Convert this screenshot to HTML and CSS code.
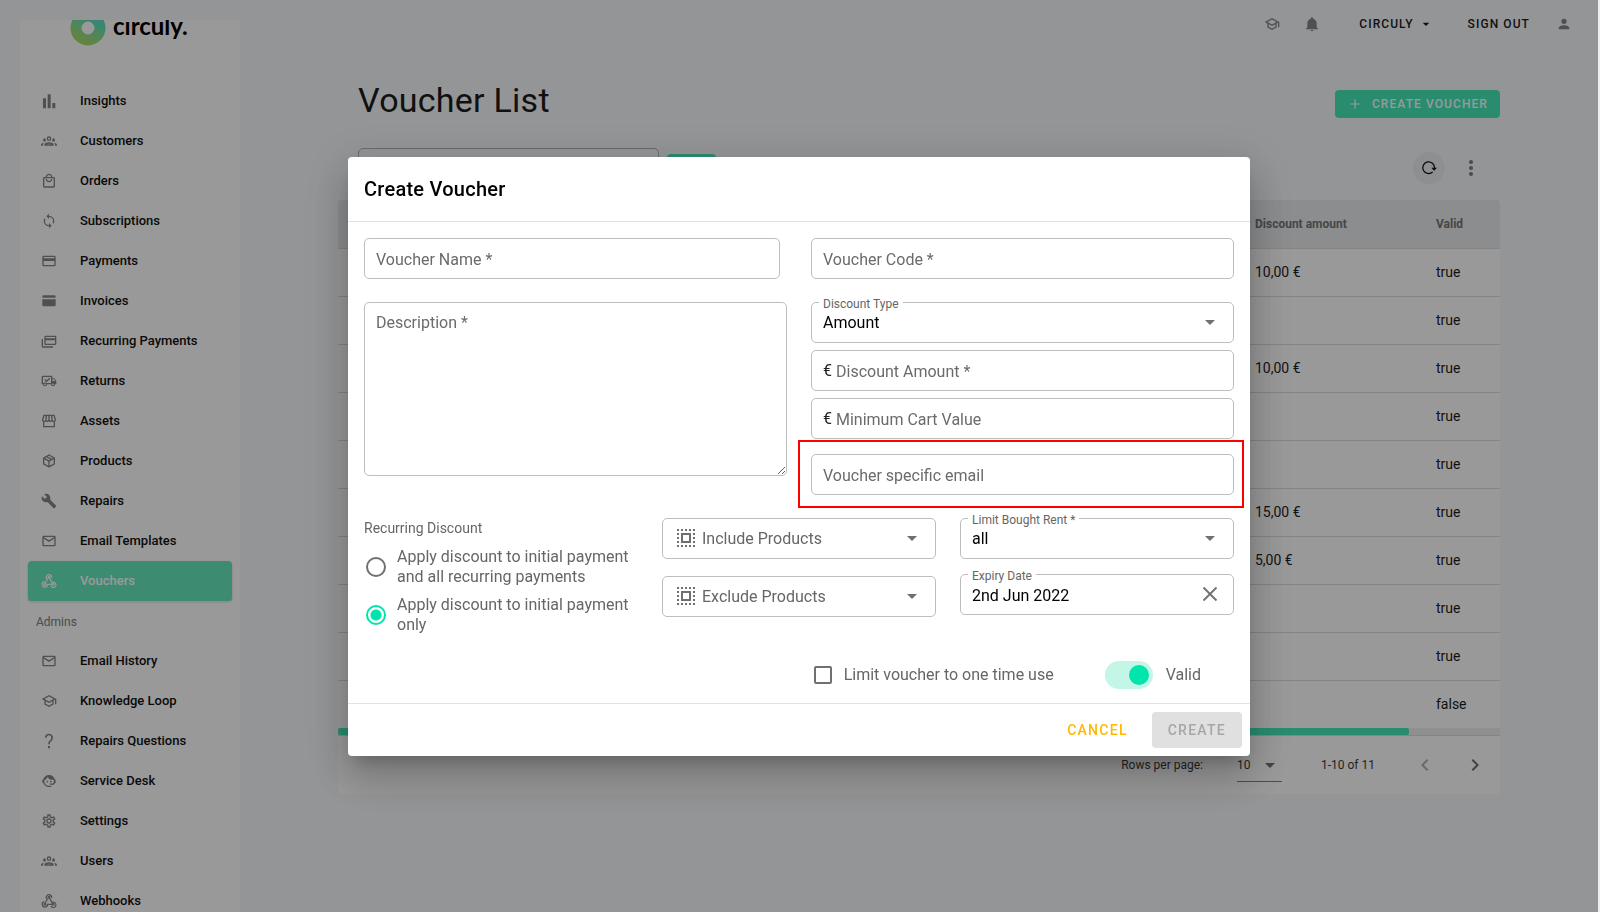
FILE: index.html
```html
<!DOCTYPE html>
<html lang="en">
<head>
<meta charset="utf-8">
<title>circuly – Voucher List</title>
<link rel="stylesheet" href="styles.css">
</head>
<body>
<svg class="sprite" aria-hidden="true">
  <symbol id="i-chart" viewBox="0 0 24 24"><path d="M3 23V8h4.500v15zM10 23V2h4.500v21zM17 23v-8h4.500v8z"/></symbol>
  <symbol id="i-group" viewBox="0 0 24 24"><path d="M12 5a3.500 3.500 0 0 0-3.500 3.500A3.500 3.500 0 0 0 12 12a3.500 3.500 0 0 0 3.500-3.500A3.500 3.500 0 0 0 12 5m0 2a1.500 1.500 0 0 1 1.500 1.500A1.500 1.500 0 0 1 12 10a1.500 1.500 0 0 1-1.500-1.500A1.500 1.500 0 0 1 12 7M5.500 8A2.500 2.500 0 0 0 3 10.500c0 .94.530 1.750 1.290 2.180.360.200.770.320 1.210.320s.850-.120 1.210-.320c.370-.210.680-.510.910-.870A5.420 5.420 0 0 1 6.500 8.500v-.280C6.200 8.080 5.860 8 5.500 8m13 0c-.360 0-.700.080-1 .220v.280c0 1.200-.390 2.360-1.120 3.310.120.190.250.340.400.490A2.500 2.500 0 0 0 21 10.500 2.500 2.500 0 0 0 18.500 8M12 14c-2.340 0-7 1.170-7 3.500V19h14v-1.500c0-2.330-4.660-3.500-7-3.500m-7.290.550C2.780 14.780 0 15.760 0 17.500V19h3v-1.930c0-1.010.690-1.850 1.710-2.520m14.580 0c1.020.670 1.710 1.510 1.710 2.520V19h3v-1.500c0-1.740-2.780-2.720-4.710-2.950M12 16c1.530 0 3.240.500 4.230 1H7.770c.990-.500 2.700-1 4.230-1"/></symbol>
  <symbol id="i-bag" viewBox="0 0 24 24"><path d="M19 6H17C17 3.2 14.8 1 12 1S7 3.2 7 6H5C3.9 6 3 6.9 3 8V20C3 21.100 3.900 22 5 22H19C20.100 22 21 21.100 21 20V8C21 6.900 20.100 6 19 6M12 3C13.700 3 15 4.300 15 6H9C9 4.300 10.300 3 12 3M19 20H5V8H19V20M12 12C10.300 12 9 10.700 9 9H7C7 11.800 9.200 14 12 14S17 11.800 17 9H15C15 10.700 13.700 12 12 12Z"/></symbol>
  <symbol id="i-sync" viewBox="0 0 24 24"><path d="M12,18A6,6 0 0,1 6,12C6,11 6.25,10.03 6.7,9.2L5.24,7.74C4.46,8.97 4,10.43 4,12A8,8 0 0,0 12,20V23L16,19L12,15M12,4V1L8,5L12,9V6A6,6 0 0,1 18,12C18,13 17.75,13.97 17.3,14.8L18.76,16.26C19.54,15.03 20,13.57 20,12A8,8 0 0,0 12,4Z"/></symbol>
  <symbol id="i-card" viewBox="0 0 24 24"><path d="M20,8H4V6H20M20,18H4V12H20M20,4H4C2.89,4 2,4.89 2,6V18C2,19.1 2.89,20 4,20H20C21.1,20 22,19.1 22,18V6C22,4.89 21.1,4 20,4Z"/></symbol>
  <symbol id="i-cardfill" viewBox="0 0 24 24"><path d="M4 3.500h16a2 2 0 0 1 2 2V7H2V5.500a2 2 0 0 1 2-2M2 9.500h20V18a2 2 0 0 1-2 2H4a2 2 0 0 1-2-2z"/></symbol>
  <symbol id="i-cards" viewBox="0 0 24 24"><path d="M21,8V6H7V8H21M21,16V11H7V16H21M21,4A2,2 0 0,1 23,6V16A2,2 0 0,1 21,18H7C5.89,18 5,17.1 5,16V6C5,4.89 5.89,4 7,4H21M3,20H18V22H3A2,2 0 0,1 1,20V9H3V20Z"/></symbol>
  <symbol id="i-truck" viewBox="0 0 24 24"><path fill-rule="evenodd" d="M3 4h14v4h3l3 4v5h-2a3 3 0 0 1-6 0H9a3 3 0 0 1-6 0H1V6a2 2 0 0 1 2-2m0 2v9h.800a3 3 0 0 1 4.400 0H15V6zm14 3.500V12h4.500l-2-2.500zM6 15.700a1.300 1.300 0 1 0 0 2.600 1.300 1.300 0 0 0 0-2.600m12 0a1.300 1.300 0 1 0 0 2.600 1.300 1.300 0 0 0 0-2.600M5 10.500 6.400 9l2 2 4-4 1.400 1.500-5.400 5.400z"/></symbol>
  <symbol id="i-store" viewBox="0 0 24 24"><path fill="none" stroke="currentColor" stroke-width="2" d="M4 12v8.500h16V12M4.500 3.500h15L21.500 10a2.400 2.400 0 0 1-4.800.500 2.400 2.400 0 0 1-4.700 0 2.400 2.400 0 0 1-4.700 0A2.400 2.400 0 0 1 2.500 10zM8.200 3.500 7.300 10M12 3.500V10M15.800 3.500l.9 6.500"/></symbol>
  <symbol id="i-box" viewBox="0 0 24 24"><path d="M21,16.5C21,16.88 20.79,17.21 20.47,17.38L12.57,21.82C12.41,21.94 12.21,22 12,22C11.79,22 11.59,21.94 11.43,21.82L3.53,17.38C3.21,17.21 3,16.88 3,16.5V7.5C3,7.12 3.21,6.79 3.53,6.62L11.43,2.18C11.59,2.06 11.79,2 12,2C12.21,2 12.41,2.06 12.57,2.18L20.47,6.62C20.79,6.79 21,7.12 21,7.5V16.5M12,4.15L10.11,5.22L16,8.61L17.96,7.5L12,4.15M6.04,7.5L12,10.85L13.96,9.75L8.08,6.35L6.04,7.5M5,15.91L11,19.29V12.58L5,9.21V15.91M19,15.91V9.21L13,12.58V19.29L19,15.91Z"/></symbol>
  <symbol id="i-wrench" viewBox="0 0 24 24"><path d="M22.7,19L13.6,9.9C14.5,7.6 14,4.9 12.1,3C10.1,1 7.1,0.6 4.7,1.7L9,6L6,9L1.6,4.7C0.4,7.1 0.9,10.1 2.9,12.1C4.8,14 7.5,14.5 9.8,13.6L18.9,22.7C19.3,23.1 19.9,23.1 20.3,22.7L22.6,20.4C23.1,20 23.1,19.3 22.7,19Z"/></symbol>
  <symbol id="i-mail" viewBox="0 0 24 24"><path d="M4,4H20A2,2 0 0,1 22,6V18A2,2 0 0,1 20,20H4C2.89,20 2,19.1 2,18V6C2,4.89 2.89,4 4,4M12,11L20,6H4L12,11M4,18H20V8.37L12,13.36L4,8.37V18Z"/></symbol>
  <symbol id="i-hook" viewBox="0 0 24 24"><g fill="none" stroke="currentColor" stroke-width="1.800"><circle cx="12" cy="6.500" r="1.400"/><circle cx="6" cy="17" r="1.400"/><circle cx="18" cy="17" r="1.400"/><path d="M15.800 7.500A4 4 0 1 0 9.500 9.700L6.200 15M5 13a4.100 4.100 0 1 0 5 4h6.500M13 8l3.500 6.200a4 4 0 1 1-1.700 5.300"/></g></symbol>
  <symbol id="i-school" viewBox="0 0 24 24"><path d="M12 3L1 9L5 11.18V17.18L12 21L19 17.18V11.18L21 10.09V17H23V9L12 3M18.82 9L12 12.72L5.18 9L12 5.28L18.82 9M17 16L12 18.72L7 16V12.27L12 15L17 12.27V16Z"/></symbol>
  <symbol id="i-help" viewBox="0 0 24 24"><path d="M10.500 19.500h3V23h-3zM12 1c5.350.220 7.680 5.620 4.500 10.170-.830 1.200-2.170 1.860-2.700 2.800-.400.730-.400 1.730-.400 3h-2.500c0-1.670 0-3.080.670-4.080.660-1 1.800-1.660 2.630-2.520C16.500 7.600 15.300 3.700 12 3.400A3.700 3.700 0 0 0 8.300 7H5.800A6.200 6.200 0 0 1 12 1"/></symbol>
  <symbol id="i-agent" viewBox="0 0 24 24"><path d="M18.72,14.76C19.07,13.91 19.26,13 19.26,12C19.26,11.28 19.15,10.59 18.96,9.95C18.31,10.1 17.63,10.18 16.92,10.18C13.86,10.18 11.15,8.67 9.5,6.34C8.61,8.5 6.91,10.26 4.77,11.22C4.73,11.47 4.73,11.74 4.73,12A7.27,7.27 0 0,0 12,19.27C13.05,19.27 14.06,19.04 14.97,18.63C15.54,19.72 15.8,20.26 15.78,20.26C14.14,20.81 12.87,21.08 12,21.08C9.58,21.08 7.27,20.13 5.57,18.42C4.53,17.38 3.76,16.11 3.33,14.73H2V10.18H3.09C3.93,6.04 7.6,2.92 12,2.92C14.4,2.92 16.71,3.87 18.42,5.58C19.69,6.84 20.54,8.45 20.89,10.18H22V14.73H21.94L18.38,18L13.08,17.4V15.73H17.91L18.72,14.76M9.27,11.77A1.14,1.14 0 1,1 9.26,11.77M14.72,11.77A1.14,1.14 0 1,1 14.71,11.77Z"/></symbol>
  <symbol id="i-cog" viewBox="0 0 24 24"><path d="M12,8A4,4 0 0,1 16,12A4,4 0 0,1 12,16A4,4 0 0,1 8,12A4,4 0 0,1 12,8M12,10A2,2 0 0,0 10,12A2,2 0 0,0 12,14A2,2 0 0,0 14,12A2,2 0 0,0 12,10M10,22C9.75,22 9.54,21.82 9.5,21.58L9.13,18.93C8.5,18.68 7.96,18.34 7.44,17.94L4.95,18.95C4.73,19.03 4.46,18.95 4.34,18.73L2.34,15.27C2.21,15.05 2.27,14.78 2.46,14.63L4.57,12.97L4.5,12L4.57,11L2.46,9.37C2.27,9.22 2.21,8.95 2.34,8.73L4.34,5.27C4.46,5.05 4.73,4.96 4.95,5.05L7.44,6.05C7.96,5.66 8.5,5.32 9.13,5.07L9.5,2.42C9.54,2.18 9.75,2 10,2H14C14.25,2 14.46,2.18 14.5,2.42L14.87,5.07C15.5,5.32 16.04,5.66 16.56,6.05L19.05,5.05C19.27,4.96 19.54,5.05 19.66,5.27L21.66,8.73C21.79,8.95 21.73,9.22 21.54,9.37L19.43,11L19.5,12L19.43,13L21.54,14.63C21.73,14.78 21.79,15.05 21.66,15.27L19.66,18.73C19.54,18.95 19.27,19.04 19.05,18.95L16.56,17.95C16.04,18.34 15.5,18.68 14.87,18.93L14.5,21.58C14.46,21.82 14.25,22 14,22H10M11.25,4L10.88,6.61C9.68,6.86 8.62,7.5 7.85,8.39L5.44,7.35L4.69,8.65L6.8,10.2C6.4,11.37 6.4,12.64 6.8,13.8L4.68,15.36L5.43,16.66L7.86,15.62C8.63,16.5 9.68,17.14 10.87,17.38L11.24,20H12.76L13.13,17.39C14.32,17.14 15.37,16.5 16.14,15.62L18.57,16.66L19.32,15.36L17.2,13.81C17.6,12.64 17.6,11.37 17.2,10.2L19.31,8.65L18.56,7.35L16.15,8.39C15.38,7.5 14.32,6.86 13.12,6.62L12.75,4H11.25Z"/></symbol>
  <symbol id="i-bell" viewBox="0 0 24 24"><path d="M21,19V20H3V19L5,17V11C5,7.9 7.03,5.17 10,4.29C10,4.19 10,4.1 10,4A2,2 0 0,1 12,2A2,2 0 0,1 14,4C14,4.1 14,4.19 14,4.29C16.97,5.17 19,7.9 19,11V17L21,19M14,21A2,2 0 0,1 12,23A2,2 0 0,1 10,21"/></symbol>
  <symbol id="i-user" viewBox="0 0 24 24"><path d="M12,4A4,4 0 0,1 16,8A4,4 0 0,1 12,12A4,4 0 0,1 8,8A4,4 0 0,1 12,4M12,14C16.42,14 20,15.79 20,18V20H4V18C4,15.79 7.58,14 12,14Z"/></symbol>
  <symbol id="i-caret" viewBox="0 0 24 24"><path d="M7 10l5 5 5-5z"/></symbol>
  <symbol id="i-plus" viewBox="0 0 24 24"><path d="M19 12.900h-6.100V19h-1.800v-6.100H5v-1.800h6.100V5h1.800v6.100H19z"/></symbol>
  <symbol id="i-reload" viewBox="0 0 24 24"><path fill="none" stroke="currentColor" stroke-width="1.900" d="M17.500 18A8.800 8.800 0 1 1 20.300 12"/><path d="M15.500 11.500h8.500l-4.300 4.500z"/></symbol>
  <symbol id="i-dots" viewBox="0 0 24 24"><circle cx="12" cy="6" r="2.100"/><circle cx="12" cy="12" r="2.100"/><circle cx="12" cy="18" r="2.100"/></symbol>
  <symbol id="i-left" viewBox="0 0 24 24"><path d="M15.410 16.580 10.830 12l4.580-4.590L14 6l-6 6 6 6z"/></symbol>
  <symbol id="i-right" viewBox="0 0 24 24"><path d="M8.590 16.580 13.170 12 8.590 7.410 10 6l6 6-6 6z"/></symbol>
  <symbol id="i-close" viewBox="0 0 24 24"><path fill="none" stroke="currentColor" stroke-width="1.800" d="M5.500 5.500l13 13M18.500 5.500l-13 13"/></symbol>
  <symbol id="i-select" viewBox="0 0 24 24"><path fill="none" stroke="currentColor" stroke-width="2" d="M8 8h8v8H8z"/><path fill="none" stroke="currentColor" stroke-width="2" stroke-dasharray="2 2" d="M3 4h18M3 20h18M4 3v18M20 3v18"/></symbol>
</svg>

<div class="app">
  <aside class="sidebar">
    <div class="logo">
      <svg class="logo-mark" viewBox="0 8 36 27">
        <defs><linearGradient id="ring" x1="0.800" y1="0" x2="0.300" y2="1"><stop offset="0.150" stop-color="#5ee0c0"/><stop offset="0.550" stop-color="#7fe09a"/><stop offset="1" stop-color="#a5dc6c"/></linearGradient></defs>
        <circle cx="18" cy="16" r="12" fill="none" stroke="url(#ring)" stroke-width="11"/>
      </svg>
      <span class="logo-name">circuly.</span>
    </div>
    <nav class="nav">
      <a class="nav-item" href="#"><svg class="icon"><use href="#i-chart"/></svg>Insights</a>
      <a class="nav-item" href="#"><svg class="icon"><use href="#i-group"/></svg>Customers</a>
      <a class="nav-item" href="#"><svg class="icon"><use href="#i-bag"/></svg>Orders</a>
      <a class="nav-item" href="#"><svg class="icon"><use href="#i-sync"/></svg>Subscriptions</a>
      <a class="nav-item" href="#"><svg class="icon"><use href="#i-card"/></svg>Payments</a>
      <a class="nav-item" href="#"><svg class="icon"><use href="#i-cardfill"/></svg>Invoices</a>
      <a class="nav-item" href="#"><svg class="icon"><use href="#i-cards"/></svg>Recurring Payments</a>
      <a class="nav-item" href="#"><svg class="icon"><use href="#i-truck"/></svg>Returns</a>
      <a class="nav-item" href="#"><svg class="icon"><use href="#i-store"/></svg>Assets</a>
      <a class="nav-item" href="#"><svg class="icon"><use href="#i-box"/></svg>Products</a>
      <a class="nav-item" href="#"><svg class="icon"><use href="#i-wrench"/></svg>Repairs</a>
      <a class="nav-item" href="#"><svg class="icon"><use href="#i-mail"/></svg>Email Templates</a>
      <a class="nav-item active" href="#"><svg class="icon"><use href="#i-hook"/></svg>Vouchers</a>
      <div class="nav-heading">Admins</div>
      <a class="nav-item" href="#"><svg class="icon"><use href="#i-mail"/></svg>Email History</a>
      <a class="nav-item" href="#"><svg class="icon"><use href="#i-school"/></svg>Knowledge Loop</a>
      <a class="nav-item" href="#"><svg class="icon"><use href="#i-help"/></svg>Repairs Questions</a>
      <a class="nav-item" href="#"><svg class="icon"><use href="#i-agent"/></svg>Service Desk</a>
      <a class="nav-item" href="#"><svg class="icon"><use href="#i-cog"/></svg>Settings</a>
      <a class="nav-item" href="#"><svg class="icon"><use href="#i-group"/></svg>Users</a>
      <a class="nav-item" href="#"><svg class="icon"><use href="#i-hook"/></svg>Webhooks</a>
    </nav>
  </aside>

  <div class="page">
    <header class="topbar">
      <button class="plain" aria-label="Knowledge"><svg class="icon"><use href="#i-school"/></svg></button>
      <button class="plain" aria-label="Notifications"><svg class="icon"><use href="#i-bell"/></svg></button>
      <button class="plain account">CIRCULY<svg class="icon"><use href="#i-caret"/></svg></button>
      <button class="plain signout">SIGN OUT</button>
      <button class="plain" aria-label="Profile"><svg class="icon"><use href="#i-user"/></svg></button>
    </header>
    <main class="content">
      <div class="title-row">
        <h1>Voucher List</h1>
        <button class="create"><svg class="icon"><use href="#i-plus"/></svg>CREATE VOUCHER</button>
      </div>
      <div class="tools">
        <input class="search" type="text" aria-label="Search">
        <button class="search-btn" aria-label="Run search"></button>
        <button class="plain reload" aria-label="Reload"><svg class="icon"><use href="#i-reload"/></svg></button>
        <button class="plain more" aria-label="More"><svg class="icon"><use href="#i-dots"/></svg></button>
      </div>
      <section class="card">
        <table>
          <thead><tr><th class="rest"></th><th class="amount">Discount amount</th><th class="valid">Valid</th></tr></thead>
          <tbody>
            <tr><td></td><td>10,00 €</td><td>true</td></tr>
            <tr><td></td><td></td><td>true</td></tr>
            <tr><td></td><td>10,00 €</td><td>true</td></tr>
            <tr><td></td><td></td><td>true</td></tr>
            <tr><td></td><td></td><td>true</td></tr>
            <tr><td></td><td>15,00 €</td><td>true</td></tr>
            <tr><td></td><td>5,00 €</td><td>true</td></tr>
            <tr><td></td><td></td><td>true</td></tr>
            <tr><td></td><td></td><td>true</td></tr>
            <tr><td></td><td></td><td>false</td></tr>
          </tbody>
        </table>
        <div class="scroll"><div class="thumb"></div></div>
        <footer class="pager">
          <label for="rows">Rows per page:</label>
          <span class="rows"><select id="rows"><option>10</option></select><svg class="icon"><use href="#i-caret"/></svg></span>
          <span class="range">1-10 of 11</span>
          <button class="plain prev" aria-label="Previous page" disabled><svg class="icon"><use href="#i-left"/></svg></button>
          <button class="plain next" aria-label="Next page"><svg class="icon"><use href="#i-right"/></svg></button>
        </footer>
      </section>
    </main>
  </div>
</div>

<div class="overlay">
  <form class="dialog" role="dialog" aria-labelledby="dialog-title">
    <h2 id="dialog-title">Create Voucher</h2>
    <div class="dialog-body">
      <div class="two">
        <div class="field name"><input type="text" placeholder="Voucher Name *" aria-label="Voucher Name"></div>
        <div class="field"><input type="text" placeholder="Voucher Code *" aria-label="Voucher Code"></div>
        <textarea placeholder="Description *" aria-label="Description"></textarea>
        <div class="stack">
          <div class="field"><label class="notch" for="type">Discount Type</label><select id="type"><option>Amount</option></select><svg class="icon"><use href="#i-caret"/></svg></div>
          <div class="field"><span class="prefix">€</span><input type="text" placeholder="Discount Amount *" aria-label="Discount Amount"></div>
          <div class="field"><span class="prefix">€</span><input type="text" placeholder="Minimum Cart Value" aria-label="Minimum Cart Value"></div>
          <div class="field email"><input type="email" placeholder="Voucher specific email" aria-label="Voucher specific email"><span class="highlight"></span></div>
        </div>
      </div>
      <div class="three">
        <div class="radios" role="radiogroup" aria-labelledby="recurring">
          <div class="legend" id="recurring">Recurring Discount</div>
          <label class="radio"><input type="radio" name="recurring">Apply discount to initial payment and all recurring payments</label>
          <label class="radio"><input type="radio" name="recurring" checked>Apply discount to initial payment only</label>
        </div>
        <div class="products">
          <div class="field"><svg class="icon lead"><use href="#i-select"/></svg><select class="muted" aria-label="Include Products"><option>Include Products</option></select><svg class="icon"><use href="#i-caret"/></svg></div>
          <div class="field"><svg class="icon lead"><use href="#i-select"/></svg><select class="muted" aria-label="Exclude Products"><option>Exclude Products</option></select><svg class="icon"><use href="#i-caret"/></svg></div>
        </div>
        <div class="limits">
          <div class="field"><label class="notch" for="rent">Limit Bought Rent *</label><select id="rent"><option>all</option></select><svg class="icon"><use href="#i-caret"/></svg></div>
          <div class="field"><label class="notch" for="expiry">Expiry Date</label><input id="expiry" type="text" value="2nd Jun 2022"><button type="button" class="plain" aria-label="Clear date"><svg class="icon"><use href="#i-close"/></svg></button></div>
        </div>
      </div>
      <div class="options">
        <label class="once"><input type="checkbox">Limit voucher to one time use</label>
        <label class="switch"><input type="checkbox" role="switch" checked>Valid</label>
      </div>
    </div>
    <div class="actions">
      <button type="button" class="cancel">CANCEL</button>
      <button type="submit" class="submit" disabled>CREATE</button>
    </div>
  </form>
</div>
</body>
</html>
```
FILE: styles.css
```css
* { box-sizing: border-box; }
body {
  margin: 0;
  background: #f7f9fc;
  color: #1c1c1c;
  font: 14px/20px Roboto, "Liberation Sans", sans-serif;
}
button, input, select, textarea { font: inherit; color: inherit; margin: 0; }
button { cursor: pointer; }
.sprite { position: absolute; width: 0; height: 0; }
.icon { width: 16px; height: 16px; fill: currentColor; flex: none; display: block; }
.plain { border: 0; padding: 0; background: none; display: flex; align-items: center; }

.app { display: flex; height: 100vh; overflow: hidden; }

.sidebar {
  flex: none;
  width: 220px;
  margin: 20px 0 0 20px;
  background: #fff;
  overflow: hidden;
}
.logo { display: flex; align-items: flex-start; gap: 7px; height: 60px; padding-left: 50px; }
.logo-mark { width: 36px; height: 27px; }
.logo-name { font: 700 24px/12px Lato, sans-serif; color: #000; }
.nav { padding: 1px 8px 0; }
.nav-item {
  display: flex;
  align-items: center;
  gap: 23px;
  height: 40px;
  padding-left: 13px;
  border-radius: 4px;
  font-size: 13px;
  font-weight: 500;
  color: #111;
  text-decoration: none;
}
.nav-item .icon { color: #858585; }
.nav-item.active { background: #67e9be; color: #fff; box-shadow: 0 1px 2px rgba(0, 0, 0, .25); }
.nav-item.active .icon { color: #fff; }
.nav-heading { height: 40px; padding-left: 8px; font-size: 12px; line-height: 40px; color: #808080; border-top: 1px solid #eee; }

.page { flex: 1; min-width: 0; }
.topbar {
  display: flex;
  align-items: center;
  justify-content: flex-end;
  height: 48px;
  padding-right: 28px;
}
.topbar .icon { color: #858585; }
.topbar .plain { font-size: 12px; font-weight: 500; letter-spacing: .09em; }
.topbar .plain + .plain { margin-left: 24px; }
.topbar .plain + .account { margin-left: 39px; }
.account { gap: 4px; }
.topbar .account .icon { color: #1c1c1c; }
.topbar .account + .signout { margin-left: 34px; }
.topbar .signout + .plain { margin-left: 26px; }

.content { padding: 0 100px 0 98px; }
.title-row {
  display: flex;
  align-items: flex-start;
  justify-content: space-between;
  height: 96px;
  padding-left: 20px;
}
h1 { margin: 32px 0 0; font-size: 34px; font-weight: 400; line-height: 40px; letter-spacing: .0073em; }
.create {
  display: flex;
  align-items: center;
  gap: 9px;
  height: 28px;
  margin-top: 42px;
  padding: 0 12px;
  border: 0;
  border-radius: 4px;
  background: #46e9b9;
  color: #fff;
  font-size: 12px;
  font-weight: 500;
  letter-spacing: .09em;
}
.tools { display: flex; align-items: center; height: 40px; margin: 4px 0 12px; padding: 0 17px 0 20px; }
.search { width: 301px; height: 40px; border: 1px solid #b0b2b6; border-radius: 5px; background: none; }
.search-btn { width: 49px; height: 28px; margin-left: 8px; border: 0; border-radius: 4px; background: #46e9b9; }
.reload { justify-content: center; width: 32px; height: 32px; margin-left: auto; border-radius: 50%; background: #eceef0; color: #111; }
.more { margin-left: 14px; color: #808080; }
.more .icon { width: 24px; height: 24px; }

.card { background: #fff; border-radius: 4px; overflow: hidden; }
table { width: 100%; border-collapse: collapse; table-layout: fixed; }
th, td { height: 48px; padding: 0; text-align: left; border-bottom: 1px solid #dcdcdc; }
th { background: #e9ebee; font-size: 12px; font-weight: 700; color: #757575; }
tbody tr:last-child td { border-bottom: 0; }
.amount { width: 181px; }
.valid { width: 64px; }
.scroll { height: 8px; background: #efefef; border-bottom: 1px solid #dcdcdc; }
.thumb { width: 92.2%; height: 7px; border-radius: 2px; background: #46e9b9; }
.pager { display: flex; align-items: center; height: 58px; padding-right: 13px; justify-content: flex-end; font-size: 12px; color: #3a3a3a; }
.rows { display: flex; align-items: center; width: 45px; height: 34px; margin-left: 34px; border-bottom: 1px solid #808080; }
.rows select { appearance: none; flex: 1; min-width: 0; width: 20px; border: 0; padding: 0; background: none; }
.rows .icon, .prev .icon, .next .icon { width: 24px; height: 24px; color: #707070; }
.range { margin-left: 39px; }
.prev { margin-left: 38px; }
.prev .icon { color: #b0b0b0; }
.next { margin-left: 26px; }

.overlay {
  position: fixed;
  inset: 0;
  display: flex;
  align-items: center;
  justify-content: center;
  background: rgba(0, 0, 0, .4) padding-box;
  border-right: 2px solid #eceded;
}
.dialog {
  width: 100%;
  max-width: 902px;
  background: #fff;
  border-radius: 4px;
  box-shadow: 0 11px 15px -7px rgba(0, 0, 0, .2), 0 24px 38px 3px rgba(0, 0, 0, .14), 0 9px 46px 8px rgba(0, 0, 0, .12);
}
h2 { margin: 0; padding: 16px; font-size: 20px; font-weight: 500; line-height: 32px; letter-spacing: .0125em; color: #000; border-bottom: 1px solid #e2e2e2; }
.dialog-body { padding: 16px 16px 14px; font-size: 16px; color: #666; }
.two { display: grid; grid-template-columns: 1fr 1fr; gap: 23px 24px; }
.three { display: grid; grid-template-columns: repeat(3, 1fr); gap: 24px; margin-top: 23px; }
.field {
  position: relative;
  display: flex;
  align-items: center;
  height: 41px;
  padding: 0 11px;
  border: 1px solid #bdbdbd;
  border-radius: 5px;
}
.field input, .field select {
  appearance: none;
  flex: 1;
  min-width: 0;
  height: 39px;
  padding: 2px 0 0;
  border: 0;
  outline: 0;
  background: none;
  color: #000;
}
.field select.muted { color: #666; }
.field .icon { width: 24px; height: 24px; color: #707070; }
.field .lead { margin-right: 4px; }
::placeholder { color: #6b6b6b; opacity: 1; }
.name { margin-right: 7px; }
.prefix { padding-top: 2px; color: #222; margin-right: 4px; }
.notch {
  position: absolute;
  top: -8px;
  left: 7px;
  padding: 0 4px;
  background: #fff;
  font-size: 12px;
  line-height: 18px;
}
textarea {
  height: 174px;
  padding: 10px 11px;
  border: 1px solid #bdbdbd;
  border-radius: 5px;
  outline: 0;
  resize: vertical;
}
.stack { display: grid; gap: 7px; align-content: start; }
.email { margin-top: 8px; }
.highlight { position: absolute; inset: -15px -11px -14px -14px; border: 2px solid #f00; pointer-events: none; }
.radios { display: grid; gap: 8px; align-content: start; }
.legend { font-size: 14px; line-height: 21px; }
.radio { display: flex; align-items: center; gap: 11px; line-height: 20px; }
.radio input {
  appearance: none;
  flex: none;
  width: 20px;
  height: 20px;
  margin-left: 2px;
  border: 2px solid #707070;
  border-radius: 50%;
}
.radio input:checked { border-color: #00e5ac; background: radial-gradient(circle, #00e5ac 5px, transparent 6px); }
.products { display: grid; gap: 17px; align-content: start; }
.limits { display: grid; gap: 15px; align-content: start; }
.options { display: flex; align-items: center; justify-content: flex-end; gap: 51px; margin-top: 26px; padding-right: 33px; line-height: 28px; }
.once, .switch { display: flex; align-items: center; }
.once { gap: 12px; }
.once input { appearance: none; width: 18px; height: 18px; border: 2px solid #707070; border-radius: 2px; }
.switch { gap: 13px; }
.switch input { appearance: none; display: flex; align-items: center; justify-content: flex-end; width: 48px; height: 28px; padding-right: 4px; border-radius: 14px; background: #c3f6e6; }
.switch input::before { content: ""; width: 20px; height: 20px; border-radius: 50%; background: #00e5ac; }
.actions { display: flex; justify-content: flex-end; align-items: center; gap: 8px; padding: 8px; border-top: 1px solid #e2e2e2; }
.actions button { height: 36px; padding: 0 16px; border: 0; border-radius: 4px; font-size: 14px; font-weight: 500; letter-spacing: .09em; }
.cancel { background: none; color: #ffb900; }
.actions .submit { background: #e0e0e0; color: #a6a6a6; }
```
